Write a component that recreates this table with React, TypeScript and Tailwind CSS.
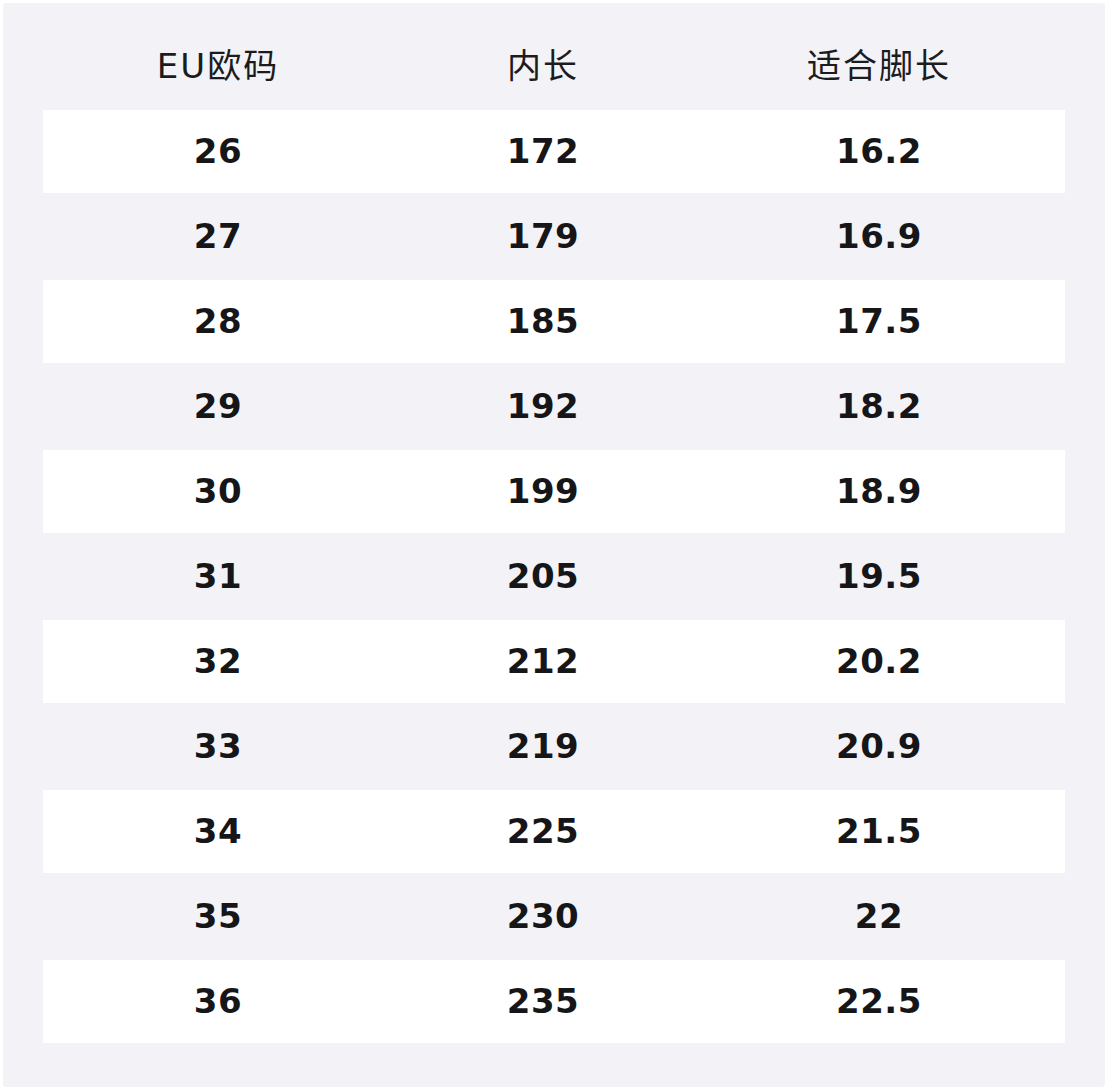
const ROWS: [string, string, string][] = [
  ["26", "172", "16.2"],
  ["27", "179", "16.9"],
  ["28", "185", "17.5"],
  ["29", "192", "18.2"],
  ["30", "199", "18.9"],
  ["31", "205", "19.5"],
  ["32", "212", "20.2"],
  ["33", "219", "20.9"],
  ["34", "225", "21.5"],
  ["35", "230", "22"],
  ["36", "235", "22.5"],
];

const COLS = "grid grid-cols-[350px_300px_372px]";

export default function App() {
  return (
    <div className="bg-white p-[3px] w-[1108px] h-[1088px] font-['DejaVu_Sans','Noto_Sans_CJK_SC',sans-serif] text-[#161618]">
      <div className="bg-[#f3f3f7] rounded-[3px] px-10 pb-[42px]">
        <div className={`${COLS} h-[107px] items-center text-[34px] tracking-[2px] pt-[20px] text-[#1c1c1e]`}>
          <div className="text-center">EU欧码</div>
          <div className="text-center">内长</div>
          <div className="text-center">适合脚长</div>
        </div>
        {ROWS.map((row, i) => (
          <div key={row[0]} className="h-[85px]">
            <div
              className={`${COLS} h-[83px] items-center text-[34px] font-bold tracking-[0.5px] ${
                i % 2 === 0 ? "bg-white" : ""
              }`}
            >
              {row.map((cell, j) => (
                <div key={j} className="text-center">
                  {cell}
                </div>
              ))}
            </div>
          </div>
        ))}
      </div>
    </div>
  );
}
